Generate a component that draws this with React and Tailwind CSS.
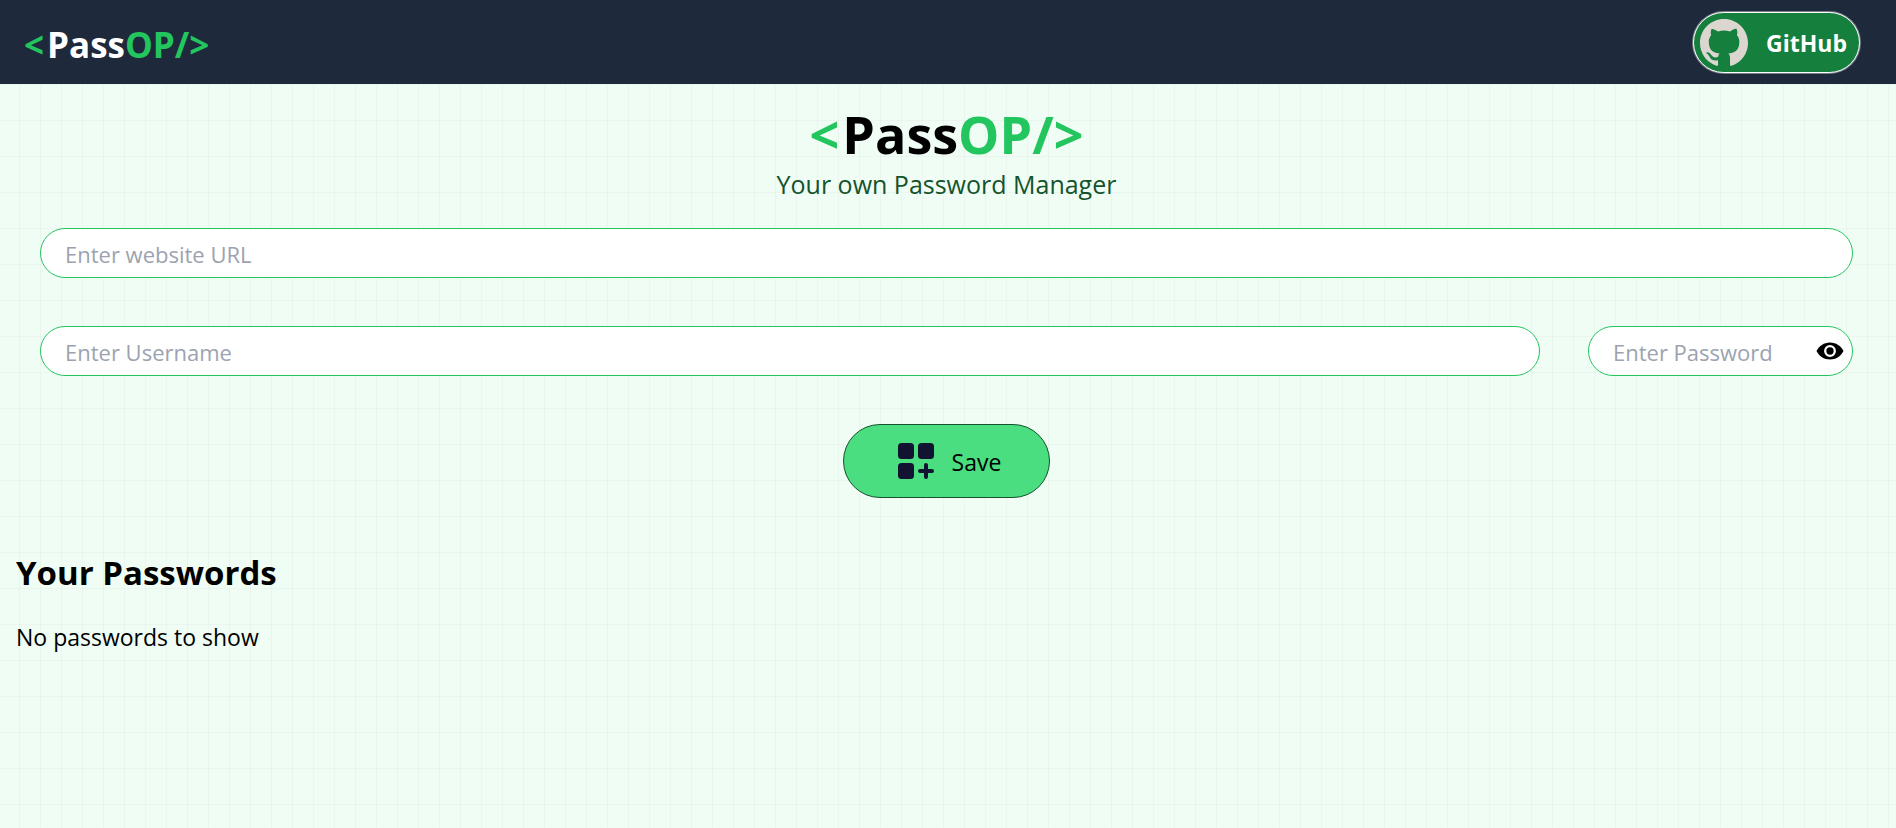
import React, { useState } from "react";

function Brand() {
  return (
    <>
      <span className="mr-[3px] text-[#22c55e]">&lt;</span>
      <span>Pass</span>
      <span className="text-[#22c55e]">OP/&gt;</span>
    </>
  );
}

function GitHubMark() {
  return (
    <svg className="size-12 shrink-0" viewBox="0 0 16 16" fill="#dbd7d0" aria-hidden="true">
      <path d="M8 0C3.58 0 0 3.58 0 8c0 3.54 2.29 6.53 5.47 7.59.4.07.55-.17.55-.38 0-.19-.01-.82-.01-1.49-2.01.37-2.53-.49-2.69-.94-.09-.23-.48-.94-.82-1.13-.28-.15-.68-.52-.01-.53.63-.01 1.08.58 1.23.82.72 1.21 1.87.87 2.33.66.07-.52.28-.87.51-1.07-1.78-.2-3.64-.89-3.64-3.95 0-.87.31-1.59.82-2.15-.08-.2-.36-1.02.08-2.12 0 0 .67-.21 2.2.82.64-.18 1.32-.27 2-.27s1.36.09 2 .27c1.53-1.04 2.2-.82 2.2-.82.44 1.1.16 1.92.08 2.12.51.56.82 1.27.82 2.15 0 3.07-1.87 3.75-3.65 3.95.29.25.54.73.54 1.48 0 1.07-.01 1.93-.01 2.2 0 .21.15.46.55.38A8.01 8.01 0 0 0 16 8c0-4.42-3.58-8-8-8z" />
    </svg>
  );
}

function EyeIcon() {
  return (
    <svg className="w-7" viewBox="0 0 28 18" aria-hidden="true">
      <path d="M0.5 9C3 4 8 0.5 14 0.5S25 4 27.5 9C25 14 20 17.5 14 17.5S3 14 0.5 9z" />
      <circle cx="14" cy="9" r="4.8" fill="none" stroke="#fff" strokeWidth="2.3" />
    </svg>
  );
}

function AddIcon() {
  return (
    <svg className="size-9" viewBox="0 0 36 36" fill="#121331" aria-hidden="true">
      <rect x="0" y="0" width="16" height="16" rx="3.5" />
      <rect x="20" y="0" width="16" height="16" rx="3.5" />
      <rect x="0" y="20" width="16" height="16" rx="3.5" />
      <path d="M28 22v12M22 28h12" stroke="#121331" strokeWidth="4" strokeLinecap="round" />
    </svg>
  );
}

const field =
  "h-[50px] w-full rounded-full border border-[#22c55e] bg-white px-6 pt-0.5 text-[22px] text-black placeholder:text-[#9ca3af] outline-none";

export default function App() {
  const [shown, setShown] = useState(false);
  return (
    <div className="min-h-screen bg-[#f0fdf4] font-['Open_Sans','Noto_Sans',sans-serif] text-[23px] leading-9 text-black">
      <nav className="flex h-[84px] items-center justify-between bg-[#1e293b] pl-6 pr-9 pt-px text-white">
        <div className="pt-1 text-[35px] font-bold">
          <Brand />
        </div>
        <a
          href="https://github.com"
          className="flex h-[61px] items-center gap-[18px] rounded-full border border-white bg-[#15803d] pl-1.5 pr-3 font-bold ring-1 ring-white/40"
        >
          <GitHubMark />
          GitHub
        </a>
      </nav>

      <main className="min-h-[calc(100vh-84px)] bg-[linear-gradient(to_right,#8080800f_1px,transparent_1px),linear-gradient(to_bottom,#8080800f_1px,transparent_1px)] bg-[size:21px_36px] bg-[position:19px_0] pl-4 pr-[19px] pt-6">
        <h1 className="text-center text-[52px] font-bold leading-[52px]">
          <Brand />
        </h1>
        <p className="pt-0.5 text-center text-[25px] leading-[44px] text-[#14532d]">Your own Password Manager</p>

        <form className="flex flex-col items-center gap-12 px-6 pt-[22px]" onSubmit={(e) => e.preventDefault()}>
          <input className={field} type="text" placeholder="Enter website URL" aria-label="Website URL" />
          <div className="flex w-full gap-12">
            <input className={field} type="text" placeholder="Enter Username" aria-label="Username" />
            <div className="relative w-[265px] shrink-0">
              <input
                className={field}
                type={shown ? "text" : "password"}
                placeholder="Enter Password"
                aria-label="Password"
              />
              <button
                type="button"
                aria-label="Show password"
                onClick={() => setShown(!shown)}
                className="absolute inset-y-0 right-[9px] flex items-center"
              >
                <EyeIcon />
              </button>
            </div>
          </div>
          <button
            type="submit"
            className="flex h-[74px] items-center gap-[18px] rounded-full border border-[#14532d] bg-[#4ade80] pl-[54px] pr-12"
          >
            <AddIcon />
            <span className="pt-0.5">Save</span>
          </button>
        </form>

        <section>
          <h2 className="pt-[50px] text-[33px] font-bold leading-[50px]">Your Passwords</h2>
          <p className="pt-[21px]">No passwords to show</p>
        </section>
      </main>
    </div>
  );
}
